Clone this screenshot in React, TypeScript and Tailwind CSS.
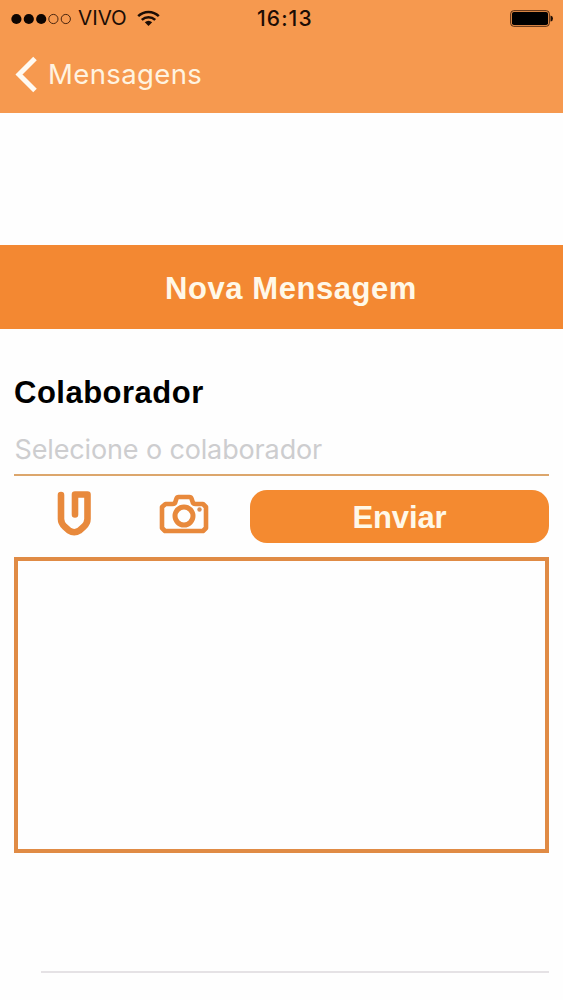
import React from "react";

function StatusBar() {
  return (
    <div className="flex h-[37px] items-center font-['Inter',sans-serif] text-[#1c0d05]">
      <div className="flex w-[257px] items-center pl-[11px]">
        <svg width="62" height="12" viewBox="0 0 62 12">
          <g fill="#0d0502">
            <circle cx="5.4" cy="6" r="5.1" />
            <circle cx="17.8" cy="6" r="5.1" />
            <circle cx="30.2" cy="6" r="5.1" />
          </g>
          <g fill="none" stroke="#4b260f" strokeWidth="1">
            <circle cx="42.4" cy="6" r="4.6" />
            <circle cx="54.8" cy="6" r="4.6" />
          </g>
        </svg>
        <span className="ml-[5px] w-[50px] whitespace-nowrap text-[20.5px] leading-none">VIVO</span>
        <svg className="ml-[9px]" width="23" height="17" viewBox="0 0 23 17">
          <g fill="none" stroke="#1c0d05" strokeWidth="2.5">
            <path d="M1.2 6.2C7 0.6 16 0.6 21.8 6.2" />
            <path d="M4.8 9.9C8.6 6.2 14.4 6.2 18.2 9.9" />
          </g>
          <path d="M7.8 12.3Q11.5 9 15.2 12.3L11.5 16Z" fill="#1c0d05" />
        </svg>
      </div>
      <span className="text-[21px] font-medium leading-none tracking-[1.1px]">16:13</span>
      <div className="flex flex-1 justify-end pr-[10px]">
        <svg width="43" height="17" viewBox="0 0 43 17">
          <rect x="0.7" y="0.7" width="38.6" height="15.6" rx="3" fill="none" stroke="#4b260f" strokeWidth="1" />
          <rect x="2" y="2" width="36" height="13" rx="1.8" fill="#000" />
          <path d="M40.5 5.5Q43 6 43 8.5T40.5 11.5Z" fill="#1c0d05" />
        </svg>
      </div>
    </div>
  );
}

export default function App() {
  return (
    <main className="flex h-[1000px] w-[563px] flex-col overflow-hidden bg-[#fefefe]">
      <header className="h-[113px] bg-[#f6994f]">
        <StatusBar />
        <button className="flex h-[75px] items-center pl-[15px] text-[#fff3e0]">
          <svg width="23" height="37" viewBox="0 0 23 37">
            <path d="M20 2.5L4 18.5L20 34.5" fill="none" stroke="#fffaf2" strokeWidth="5" />
          </svg>
          <span className="ml-[10px] font-['Inter',sans-serif] text-[27.5px] font-normal leading-none tracking-[0.38px]">Mensagens</span>
        </button>
      </header>

      <h1 className="mt-[132px] flex h-[84px] items-center justify-center bg-[#f38832] pl-[19px] pt-[3px] font-['Liberation_Sans',sans-serif] text-[31px] font-bold leading-none tracking-[0.55px] text-[#fff8e8]">
        Nova Mensagem
      </h1>

      <section className="flex flex-col px-[14px] pt-[46px]">
        <label className="h-[36px] font-['Liberation_Sans',sans-serif] text-[31px] font-bold leading-[36px] tracking-[0.5px] text-black">Colaborador</label>
        <div className="mt-[14px] h-[51px] border-b-2 border-[#dca66c] pl-[0.5px] font-['Inter',sans-serif] text-[27px] font-normal leading-[50px] tracking-[-0.14px] text-[#cdcdcf]">
          Selecione o colaborador
        </div>

        <div className="mt-[14px] flex h-[53px]">
          <button className="flex w-[120px] justify-center">
            <svg width="36" height="48" viewBox="0 0 36 48">
              <path
                d="M5 5V29Q5 33 8.5 36.5L13 40.5Q18.2 44 23.5 40.5L28 36.5Q31.5 33 31.5 29V4.5H19V24.5"
                fill="none"
                stroke="#e8893c"
                strokeWidth="6.6"
                strokeLinecap="round"
                strokeLinejoin="round"
              />
            </svg>
          </button>
          <button className="flex w-[116px] pl-[25px] pt-[4px]">
            <svg width="50" height="41" viewBox="0 0 50 41">
              <g fill="none" stroke="#e8893c" strokeWidth="4.6" strokeLinejoin="round">
                <path d="M6.5 10H13.5Q16 10 16.5 7.5L17.5 4.5Q18 3 19.5 3H30.5Q32 3 32.5 4.5L33.5 7.5Q34 10 36.5 10H44L47 13V34L44 37H6L3 34V13Z" />
                <circle cx="25" cy="22" r="9" strokeWidth="5" />
              </g>
              <circle cx="40.5" cy="15.5" r="2.2" fill="#d98e56" />
            </svg>
          </button>
          <button className="flex-1 rounded-[17px] bg-[#f48a30] pt-[1px] font-['Liberation_Sans',sans-serif] text-[31px] font-bold leading-none tracking-[-0.1px] text-[#fff8e8]">Enviar</button>
        </div>

        <textarea aria-label="Mensagem" className="mt-[14px] block h-[296px] w-full resize-none border-[4px] border-[#e08b45] bg-transparent outline-none" />
        <hr className="ml-[27px] mt-[118px] border-t-2 border-[#e5e2e5]" />
      </section>
    </main>
  );
}
